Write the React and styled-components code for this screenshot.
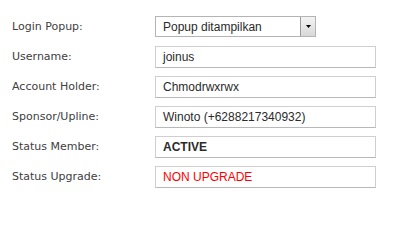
import styled, { createGlobalStyle } from "styled-components";

const GlobalStyle = createGlobalStyle`
  body {
    margin: 0;
    background: #fff;
  }
`;

const rows = [
  { label: "Username:", value: "joinus" },
  { label: "Account Holder:", value: "Chmodrwxrwx" },
  { label: "Sponsor/Upline:", value: "Winoto (+6288217340932)" },
  { label: "Status Member:", value: "ACTIVE", tone: "bold" },
  { label: "Status Upgrade:", value: "NON UPGRADE", tone: "red" },
];

const App = () => {
  return (
    <>
      <GlobalStyle />
      <Form>
        <Label>Login Popup:</Label>
        <Select>
          <span>Popup ditampilkan</span>
          <DropButton>
            <svg width="5" height="3" viewBox="0 0 5 3">
              <path d="M0 0h5L2.5 3z" fill="#000" />
            </svg>
          </DropButton>
        </Select>
        {rows.map((row) => (
          <Row key={row.label}>
            <Label>{row.label}</Label>
            <Field $tone={row.tone}>{row.value}</Field>
          </Row>
        ))}
      </Form>
    </>
  );
};

export default App;

const Form = styled.div`
  display: grid;
  grid-template-columns: 143px 221px;
  grid-auto-rows: 22px;
  row-gap: 8px;
  align-items: center;
  padding: 16px 0 0 12px;
`;

const Row = styled.div`
  display: contents;
`;

const Label = styled.div`
  font-family: "DejaVu Sans", Verdana, sans-serif;
  font-size: 11px;
  color: #404040;
  line-height: 22px;
`;

const Select = styled.div`
  box-sizing: border-box;
  width: 161px;
  height: 21px;
  border: 1px solid #b4b4b4;
  display: flex;
  align-items: center;
  justify-content: space-between;
  padding-left: 7px;
  font-family: "Liberation Sans", Arial, sans-serif;
  font-size: 12px;
  color: #2a2a2a;
  align-self: start;
`;

const DropButton = styled.div`
  box-sizing: border-box;
  width: 15px;
  height: 19px;
  border-left: 1px solid #9a9a9a;
  background: linear-gradient(#f4f4f4, #d8d8d8);
  display: flex;
  align-items: center;
  justify-content: center;
`;

const Field = styled.div`
  box-sizing: border-box;
  height: 22px;
  border: 1px solid #cfcfcf;
  border-bottom-color: #b8b8b8;
  padding: 0 7px;
  display: flex;
  align-items: center;
  font-family: "Liberation Sans", Arial, sans-serif;
  font-size: 12px;
  color: ${({ $tone }) => ($tone === "red" ? "#ff0000" : "#2a2a2a")};
  font-weight: ${({ $tone }) => ($tone === "bold" ? "bold" : "normal")};
`;
